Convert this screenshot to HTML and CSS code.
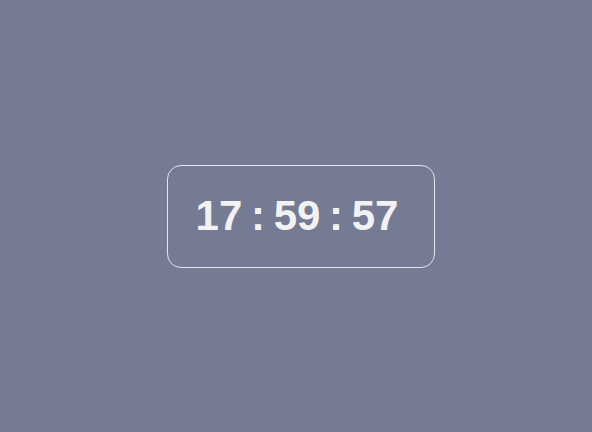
FILE: index.html
```html
<!DOCTYPE html>
<html lang="en">
<head>
<meta charset="utf-8">
<title>Clock</title>
<link rel="stylesheet" href="styles.css">
</head>
<body>
<div class="clock">17 : 59 : 57</div>
</body>
</html>
```

FILE: styles.css
```css
html, body {
  margin: 0;
  height: 100%;
}
body {
  background: #757b92;
  display: flex;
  align-items: center;
  justify-content: center;
  padding-left: 9px;
  box-sizing: border-box;
  font-family: "Liberation Sans", Arial, sans-serif;
}
.clock {
  box-sizing: border-box;
  width: 268px;
  height: 103px;
  padding-right: 7px;
  border: 1px solid #e4e6ec;
  border-radius: 14px;
  display: flex;
  align-items: center;
  justify-content: center;
  color: #f2f2f4;
  font-weight: bold;
  font-size: 42px;
  word-spacing: -3px;
  white-space: pre;
}
```
